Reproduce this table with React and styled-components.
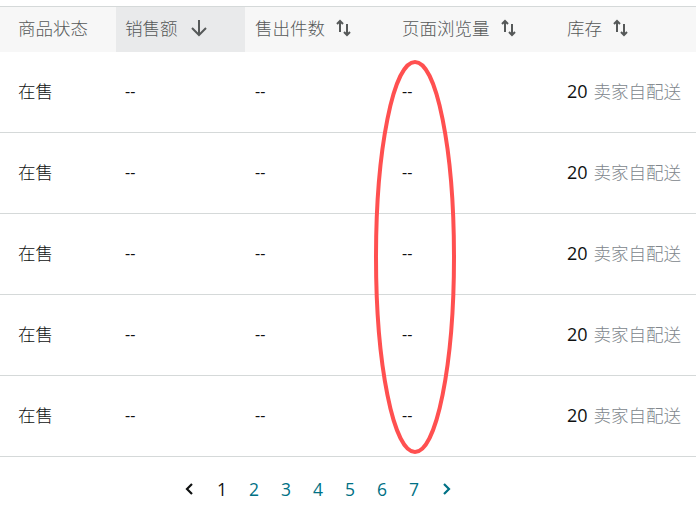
import styled, { createGlobalStyle } from "styled-components";

const GlobalStyle = createGlobalStyle`
  html, body {
    margin: 0;
    padding: 0;
    background: #fff;
  }
  body {
    font-family: "Open Sans", "Noto Sans CJK SC", sans-serif;
    font-weight: 300;
    color: #0f1111;
  }
`;

const Page = styled.div`
  position: relative;
  width: 696px;
  height: 516px;
  padding-top: 6px;
  box-sizing: border-box;
  overflow: hidden;
`;

const Table = styled.div`
  display: grid;
  grid-template-columns: 116px 129px 147px 165px 1fr;
  border-top: 1px solid #d5d9d9;
`;

const HeadCell = styled.div`
  display: flex;
  align-items: center;
  gap: 11px;
  height: 45px;
  box-sizing: border-box;
  padding: 0 0 4px ${(p) => p.$pad}px;
  background: ${(p) => (p.$active ? "#e9eaeb" : "#f7f7f7")};
  color: #565959;
  font-size: 17.5px;
  white-space: nowrap;
`;

const Cell = styled.div`
  display: flex;
  align-items: center;
  height: 80px;
  padding: 0 0 3px ${(p) => p.$pad}px;
  box-sizing: content-box;
  height: 77px;
  border-bottom: 1px solid #d5d9d9;
  font-size: 17.5px;
  white-space: nowrap;
`;

const Dash = styled.span`
  font-size: 16px;
  font-weight: 400;
  color: #0f1111;
`;

const Num = styled.span`
  font-weight: 400;
  font-size: 18px;
`;

const Muted = styled.span`
  color: #80868c;
  margin-left: 6px;
`;

const Pager = styled.div`
  display: flex;
  align-items: center;
  height: 62px;
  padding: 2px 0 0 174px;
  box-sizing: border-box;
`;

const PageItem = styled.span`
  width: 32px;
  text-align: center;
  font-size: 17.5px;
  font-weight: 400;
  color: ${(p) => (p.$current ? "#0f1111" : "#007185")};
`;

const Arrow = styled.span`
  display: flex;
  justify-content: center;
  width: 32px;
  color: ${(p) => p.$color};
`;

const Circle = styled.svg`
  position: absolute;
  left: 372px;
  top: 58px;
  pointer-events: none;
`;

const SortBoth = () => (
  <svg width="16" height="18" viewBox="0 0 16 18">
    <path d="M4 13V2M1 5l3-3 3 3" fill="none" stroke="#565959" strokeWidth="2" />
    <path d="M11 5v11M8 13l3 3 3-3" fill="none" stroke="#565959" strokeWidth="2" />
  </svg>
);

const SortDown = () => (
  <svg width="20" height="20" viewBox="0 0 20 20">
    <path d="M10 2v15M3 10l7 7 7-7" fill="none" stroke="#565959" strokeWidth="2" />
  </svg>
);

const Chevron = ({ dir }) => (
  <svg width="10" height="14" viewBox="0 0 10 14">
    <path
      d={dir === "left" ? "M7 2L2 7l5 5" : "M3 2l5 5-5 5"}
      fill="none"
      stroke="currentColor"
      strokeWidth="2.2"
    />
  </svg>
);

const pads = [18, 9, 10, 10, 10];
const rows = [1, 2, 3, 4, 5];

export default function App() {
  return (
    <Page>
      <GlobalStyle />
      <Table>
        <HeadCell $pad={pads[0]}>商品状态</HeadCell>
        <HeadCell $pad={pads[1]} $active>
          销售额 <SortDown />
        </HeadCell>
        <HeadCell $pad={pads[2]}>
          售出件数 <SortBoth />
        </HeadCell>
        <HeadCell $pad={pads[3]}>
          页面浏览量 <SortBoth />
        </HeadCell>
        <HeadCell $pad={pads[4]}>
          库存 <SortBoth />
        </HeadCell>
        {rows.map((r) => [
          <Cell key={`a${r}`} $pad={pads[0]}>在售</Cell>,
          <Cell key={`b${r}`} $pad={pads[1]}><Dash>--</Dash></Cell>,
          <Cell key={`c${r}`} $pad={pads[2]}><Dash>--</Dash></Cell>,
          <Cell key={`d${r}`} $pad={pads[3]}><Dash>--</Dash></Cell>,
          <Cell key={`e${r}`} $pad={pads[4]}>
            <Num>20</Num><Muted>卖家自配送</Muted>
          </Cell>,
        ])}
      </Table>
      <Pager>
        <Arrow $color="#0f1111"><Chevron dir="left" /></Arrow>
        {[1, 2, 3, 4, 5, 6, 7].map((n) => (
          <PageItem key={n} $current={n === 1}>{n}</PageItem>
        ))}
        <Arrow $color="#007185"><Chevron dir="right" /></Arrow>
      </Pager>
      <Circle width="86" height="400" viewBox="0 0 86 400">
        <ellipse cx="43" cy="199" rx="39" ry="195" fill="none" stroke="#ff5050" strokeWidth="4" />
      </Circle>
    </Page>
  );
}
